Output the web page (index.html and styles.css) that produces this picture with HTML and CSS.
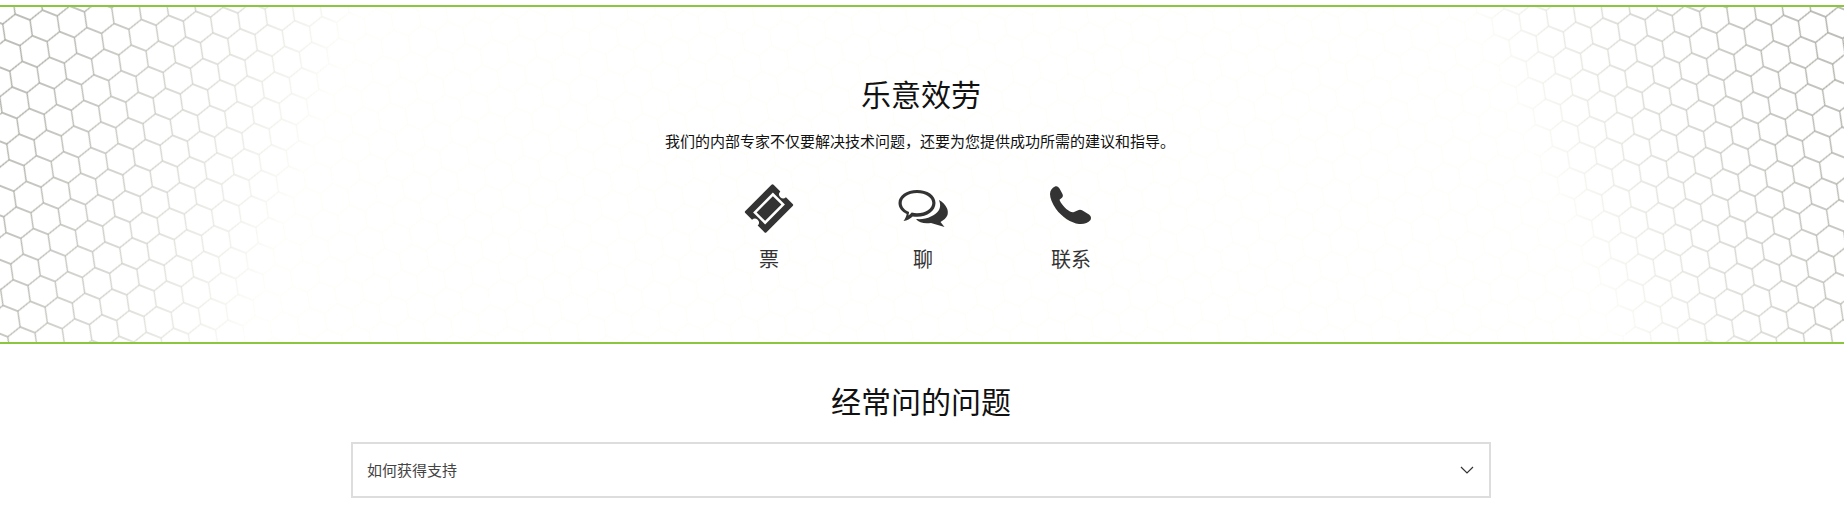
FILE: index.html
```html
<!DOCTYPE html>
<html lang="zh-CN">
<head>
<meta charset="utf-8">
<title>乐意效劳</title>
<link rel="stylesheet" href="styles.css">
</head>
<body>
<div class="page">
  <section class="help">
    <svg class="hex-bg" width="1844" height="336" aria-hidden="true">
      <defs>
        <path id="cell" d="M0 0H15.9L23.85 13.77H39.75L47.7 0M23.85 13.77L15.9 27.54M39.75 13.77L47.7 27.54"/>
        <g id="tile">
          <use href="#cell"/>
          <use href="#cell" y="27.54"/>
          <use href="#cell" y="-27.54"/>
          <use href="#cell" x="-47.7"/>
          <use href="#cell" x="47.7"/>
          <use href="#cell" x="-47.7" y="27.54"/>
          <use href="#cell" x="47.7" y="27.54"/>
          <use href="#cell" x="-47.7" y="-27.54"/>
          <use href="#cell" x="47.7" y="-27.54"/>
        </g>
        <pattern id="hexL" width="47.7" height="27.54" patternUnits="userSpaceOnUse" patternTransform="translate(30 13) rotate(21.5) translate(-15.9 0)">
          <use href="#tile" class="hex-line"/>
        </pattern>
        <pattern id="hexFaint" width="47.7" height="27.54" patternUnits="userSpaceOnUse" patternTransform="translate(30 13) rotate(21.5) translate(-15.9 0)">
          <use href="#tile" class="hex-faint"/>
        </pattern>
        <linearGradient id="fadeL" gradientUnits="userSpaceOnUse" x1="0" y1="76" x2="300" y2="175">
          <stop offset="0" stop-color="#fff"/>
          <stop offset="0.3" stop-color="#fff" stop-opacity=".8"/>
          <stop offset="1" stop-color="#fff" stop-opacity="0"/>
        </linearGradient>
        <linearGradient id="fadeR" gradientUnits="userSpaceOnUse" x1="1844" y1="42" x2="1546" y2="175">
          <stop offset="0" stop-color="#fff"/>
          <stop offset="0.3" stop-color="#fff" stop-opacity=".8"/>
          <stop offset="1" stop-color="#fff" stop-opacity="0"/>
        </linearGradient>
        <mask id="maskL"><rect width="1844" height="336" fill="url(#fadeL)"/></mask>
        <mask id="maskR"><rect width="1844" height="336" fill="url(#fadeR)"/></mask>
      </defs>
      <rect width="1844" height="336" fill="url(#hexFaint)"/>
      <rect width="1844" height="336" fill="url(#hexL)" mask="url(#maskL)"/>
      <rect width="1844" height="336" fill="url(#hexL)" mask="url(#maskR)"/>
    </svg>
    <div class="help-inner">
      <h2 class="title">乐意效劳</h2>
      <p class="lead">我们的内部专家不仅要解决技术问题，还要为您提供成功所需的建议和指导。</p>
      <div class="channels">
        <a class="channel">
          <svg class="icon" viewBox="0 1.500 60 56" aria-hidden="true">
            <g transform="rotate(-45 30 30)">
              <path fill-rule="evenodd" d="M11.500 15h37a1.500 1.500 0 0 1 1.500 1.500v9.500a4 4 0 0 0 0 8v9.500a1.500 1.500 0 0 1-1.500 1.500h-37a1.500 1.500 0 0 1-1.500-1.500V34a4 4 0 0 0 0-8v-9.500a1.500 1.500 0 0 1 1.500-1.500zM16 21.500v17h28v-17zM18.500 24h23v12h-23z"/>
            </g>
          </svg>
          <span class="label">票</span>
        </a>
        <a class="channel">
          <svg class="icon" viewBox="2 -2 60 56" aria-hidden="true">
            <path fill-rule="evenodd" d="M26 8C15.500 8 7.500 13.800 7.500 21c0 4.700 3.300 8.700 8.200 11-.5 2.600-1.700 5-3.200 7 3.500-.7 6.800-2.300 9.200-4.600 1.400.2 2.800.3 4.300.3 10.500 0 18.500-6 18.500-13.700S36.500 8 26 8zm0 3c8.700 0 15.300 4.500 15.300 10S34.700 31.300 26 31.300c-1.700 0-3.400-.2-5.300-.7-1.100 1.200-2.200 2.200-3.400 3 .4-1.100.7-2.300.8-3.600C13.700 28.300 10.700 25 10.700 21c0-5.500 6.600-10 15.300-10z"/>
            <path d="M48 18C55 22 58 28 56.500 33C55.500 36 52.500 38 49.500 40L53.500 45L40 41C34 42 28 41 25 37C35 38 44 34 48 28C50 24 49 21 48 18Z"/>
          </svg>
          <span class="label">聊</span>
        </a>
        <a class="channel">
          <svg class="icon" viewBox="-2 -1 60 56" aria-hidden="true">
            <path d="M12 5.500C14 4.500 15.500 6 16.500 7.500L19.500 13C20.500 15 19.500 16.500 18 17.500L16.500 18.800C17 21 22 28 27 30.500C28.500 31.200 29.800 31.500 31 31L34.500 29.500C36 28.500 38 28.500 39.500 29.500L46 33.500C48 35 48.500 37 47.500 39C45 42 41 43.500 36 43C28 42 19 36 13 28C9 22 7 17 7 13C7 9.500 9 7 12 5.500Z"/>
          </svg>
          <span class="label">联系</span>
        </a>
      </div>
    </div>
  </section>
  <section class="faq">
    <h2 class="title">经常问的问题</h2>
    <div class="faq-item">
      <span>如何获得支持</span>
      <svg class="chevron" viewBox="0 0 14 8" aria-hidden="true"><path d="M1 1l6 6 6-6"/></svg>
    </div>
  </section>
</div>
</body>
</html>
```
FILE: styles.css
```css
* { box-sizing: border-box; }
html, body { margin: 0; padding: 0; background: #fff; }
body {
  font-family: "Noto Sans CJK SC", "Liberation Sans", sans-serif;
  color: #111;
  overflow: hidden;
}
.page { padding-top: 5px; height: 517px; }
.help {
  position: relative;
  height: 339px;
  border-top: 2px solid #8cc63f;
  border-bottom: 2px solid #8cc63f;
  overflow: hidden;
}
.hex-bg { position: absolute; left: 0; top: 0; }
.hex-line { fill: none; stroke: #a8a8a3; stroke-width: 1.3; }
.hex-faint { fill: none; stroke: #fefef8; stroke-width: 1.2; }
.help-inner {
  position: relative;
  width: 1842px;
  padding-top: 64px;
  display: flex;
  flex-direction: column;
  align-items: center;
}
.title {
  margin: 0;
  font-size: 30px;
  font-weight: 400;
  line-height: 44px;
  color: #111;
}
.lead {
  margin: 15px 2px 0 0;
  font-size: 15px;
  line-height: 22px;
  color: #111;
}
.channels {
  display: grid;
  grid-template-columns: 160px 148px 148px;
  margin-top: 28px;
  margin-left: -8px;
}
.channel {
  display: flex;
  flex-direction: column;
  align-items: center;
  color: #333;
}
.icon { width: 60px; height: 56px; fill: #333; }
.label { font-size: 20px; line-height: 28px; margin-top: 9px; color: #333; }
.faq {
  width: 1842px;
  display: flex;
  flex-direction: column;
  align-items: center;
  padding-top: 34px;
}
.faq-item {
  width: 1140px;
  height: 56px;
  margin-top: 20px;
  border: 2px solid #ddd;
  padding: 0 15px 0 14px;
  display: flex;
  align-items: center;
  justify-content: space-between;
  font-size: 15px;
  color: #444;
}
.faq-item span { position: relative; top: -1px; }
.chevron { width: 14px; height: 8px; fill: none; stroke: #333; stroke-width: 1.2; }
```
